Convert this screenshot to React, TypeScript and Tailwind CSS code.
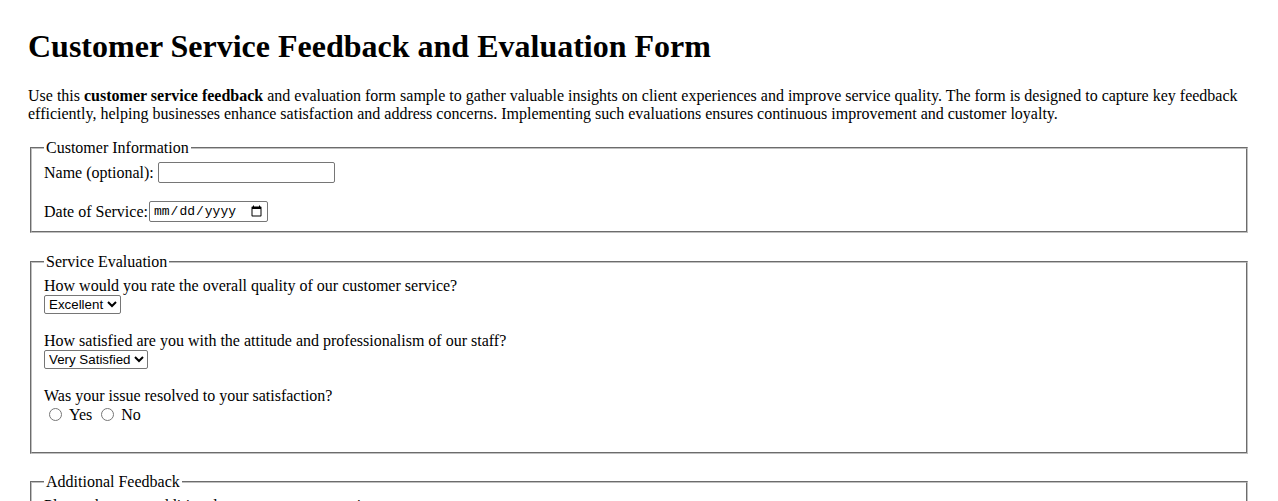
import React from "react";

const Fieldset = ({
  legend,
  cls,
  children,
}: {
  legend: string;
  cls: string;
  children: React.ReactNode;
}) => (
  <fieldset className={`mx-[2px] border-2 border-[#c0c0c0] [border-style:groove] px-[12px] ${cls}`}>
    <legend className="px-[2px] leading-[18px]">{legend}</legend>
    {children}
  </fieldset>
);

const selectCls =
  "block h-[19px] border border-[#767676] rounded-[2px] bg-white text-black font-['Liberation_Sans'] text-[13.33px]";

export default function App() {
  return (
    <div className="min-h-screen bg-white px-[28px] pt-[28px] font-['Liberation_Serif',serif] text-[16px] text-black">
      <h1 className="mb-[22px] text-[32px] font-bold leading-[37px]">
        Customer Service Feedback and Evaluation Form
      </h1>
      <p className="mb-[16px] leading-[18px]">
        Use this <strong>customer service feedback</strong> and evaluation form sample to gather valuable
        insights on client experiences and improve service quality. The form is designed to capture key
        feedback efficiently, helping businesses enhance satisfaction and address concerns. Implementing such
        evaluations ensures continuous improvement and customer loyalty.
      </p>

      <form>
        <Fieldset legend="Customer Information" cls="mb-[20px] pt-[5px] pb-[9px]">
          <div className="flex h-[21px] items-center">
            <label htmlFor="name">Name (optional):</label>
            <input
              id="name"
              type="text"
              className="ml-[4px] h-[21px] w-[177px] rounded-[2px] border border-[#767676] bg-white px-[2px] font-['Liberation_Sans'] text-[13.33px]"
            />
          </div>
          <div className="mt-[18px] flex h-[21px] items-center">
            <label htmlFor="date">Date of Service:</label>
            <input
              id="date"
              type="date"
              className="ml-[1px] h-[21px] w-[119px] rounded-[2px] border border-[#767676] bg-white pl-[3px] pr-[2px] font-['Liberation_Mono',monospace] text-[13px]"
            />
          </div>
        </Fieldset>

        <Fieldset legend="Service Evaluation" cls="mb-[19px] pt-[6px] pb-[10px]">
          <div className="mb-[18px]">
            <label className="block leading-[18px]">How would you rate the overall quality of our customer service?</label>
            <select className={selectCls} defaultValue="Excellent">
              <option>Excellent</option>
              <option>Good</option>
              <option>Average</option>
              <option>Poor</option>
            </select>
          </div>
          <div className="mb-[18px]">
            <label className="block leading-[18px]">
              How satisfied are you with the attitude and professionalism of our staff?
            </label>
            <select className={selectCls} defaultValue="Very Satisfied">
              <option>Very Satisfied</option>
              <option>Satisfied</option>
              <option>Neutral</option>
              <option>Dissatisfied</option>
            </select>
          </div>
          <div className="mb-[18px]">
            <p className="leading-[18px]">Was your issue resolved to your satisfaction?</p>
            <div className="flex h-[19px] items-center">
              <label className="flex items-center">
                <input type="radio" name="resolved" className="ml-[5px] mr-[7px] h-[13px] w-[13px]" />
                Yes
              </label>
              <label className="flex items-center">
                <input type="radio" name="resolved" className="ml-[9px] mr-[7px] h-[13px] w-[13px]" />
                No
              </label>
            </div>
          </div>
        </Fieldset>

        <Fieldset legend="Additional Feedback" cls="mb-[19px] pt-[6px] pb-[10px]">
          <label className="block leading-[18px]">Please share any additional comments or suggestions:</label>
          <textarea
            rows={4}
            className="mt-[2px] w-[400px] rounded-[2px] border border-[#767676] bg-white"
          />
        </Fieldset>
      </form>
    </div>
  );
}
